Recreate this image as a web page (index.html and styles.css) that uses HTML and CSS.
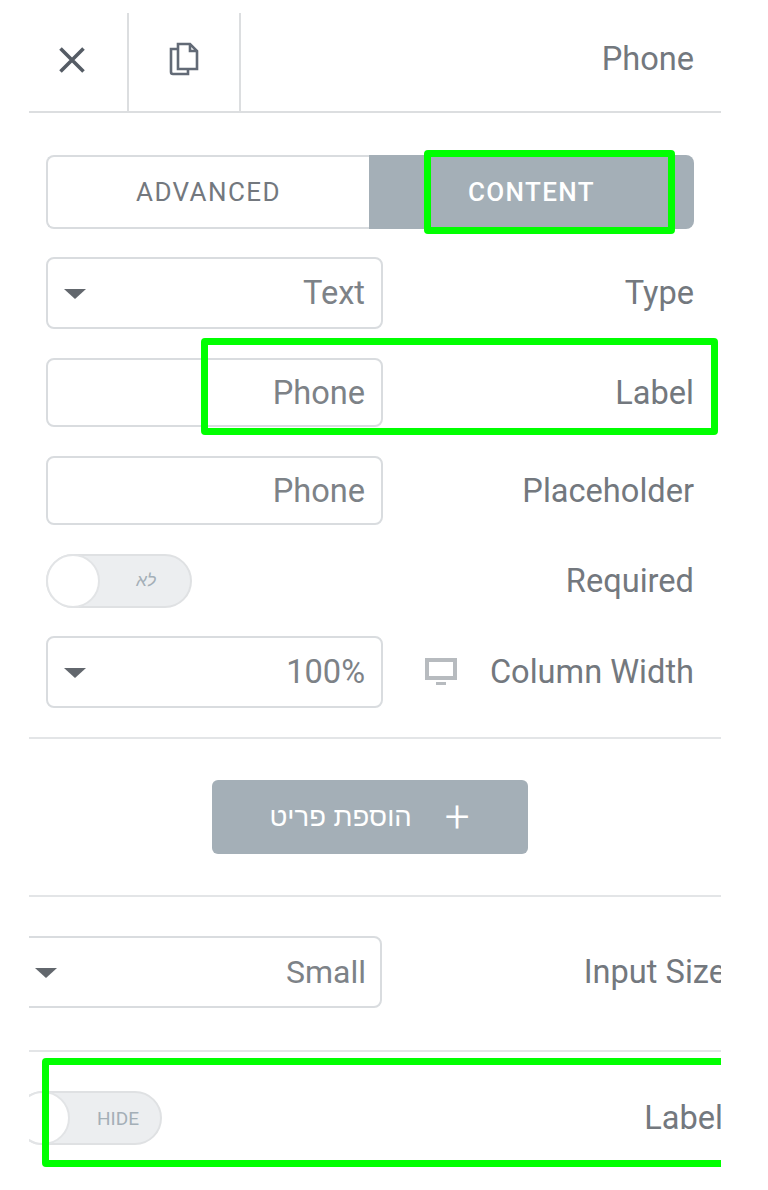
FILE: index.html
```html
<!DOCTYPE html>
<html lang="en">

<head>
    <meta charset="UTF-8" />
    <meta name="viewport" content="width=device-width, initial-scale=1" />
    <title>Phone field settings</title>
    <link rel="stylesheet" href="styles.css">
</head>

<body>
    <main class="panel">
        <header class="panel-head">
            <button class="head-btn close-btn" aria-label="Close">
                <svg width="28" height="28" viewBox="0 0 28 28"><path d="M2.5 2.5 25.5 25.5M25.5 2.5 2.5 25.5" fill="none" stroke="#555c65" stroke-width="3.6"/></svg>
            </button>
            <button class="head-btn copy-btn" aria-label="Duplicate">
                <svg width="30" height="34" viewBox="0 0 30 34" fill="none" stroke="#626a76" stroke-width="2.6">
                    <path d="M9 7H2V30a2 2 0 0 0 2 2H19V27"/>
                    <path d="M9 2H21L28 9V27H9Z"/>
                    <path d="M21 2V9H28"/>
                </svg>
            </button>
            <span class="head-title">Phone</span>
        </header>

        <section class="group group-fields">
            <div class="tabs">
                <div class="tab">ADVANCED</div>
                <div class="tab tab-active">CONTENT</div>
            </div>

            <div class="row">
                <div class="box box-select"><span class="caret"></span><span>Text</span></div>
                <label class="row-label">Type</label>
            </div>
            <div class="row">
                <div class="box box-input"><span>Phone</span></div>
                <label class="row-label">Label</label>
            </div>
            <div class="row">
                <div class="box box-input"><span>Phone</span></div>
                <label class="row-label">Placeholder</label>
            </div>
            <div class="row row-required">
                <div class="switch"><span class="knob"></span><span class="switch-text switch-he">לא</span></div>
                <label class="row-label">Required</label>
            </div>
            <div class="row">
                <div class="box box-select"><span class="caret"></span><span>100%</span></div>
                <div class="label-with-icon">
                    <svg class="monitor" width="32" height="28" viewBox="0 0 32 28">
                        <path d="M2 2H30V20H2Z" fill="#fff" stroke="#b7bbbf" stroke-width="4"/>
                        <path d="M11 25.5H21" stroke="#b7bbbf" stroke-width="3"/>
                    </svg>
                    <label class="row-label">Column Width</label>
                </div>
            </div>
        </section>

        <section class="group group-add">
            <button class="add-btn"><span class="add-plus">+</span><span dir="rtl">הוספת פריט</span></button>
        </section>

        <section class="group group-size">
            <div class="row row-clipped">
                <div class="box box-select box-wide"><span class="caret"></span><span>Small</span></div>
                <label class="row-label">Input Size</label>
            </div>
        </section>

        <section class="group group-last">
            <div class="row row-clipped row-toggle">
                <div class="switch switch-hide"><span class="knob"></span><span class="switch-text">HIDE</span></div>
                <label class="row-label">Label</label>
            </div>
        </section>

        <div class="mark mark-tab"></div>
        <div class="mark mark-label"></div>
        <div class="mark mark-toggle"></div>
    </main>
</body>

</html>
```
FILE: styles.css
```css
/* Reset */

* {
    margin: 0;
    padding: 0;
    box-sizing: border-box;
}

body {
    font-family: Roboto, 'Liberation Sans', sans-serif;
    background: #ffffff;
    color: #73787e;
}

button {
    font-family: inherit;
    background: none;
    border: none;
}

/* Panel */

.panel {
    position: relative;
    width: 692px;
    height: 1190px;
    margin-left: 29px;
    padding-top: 13px;
    overflow: hidden;
}

.panel-head {
    display: flex;
    align-items: stretch;
    height: 100px;
    border-bottom: 2px solid #dcdee0;
}

.head-btn {
    display: flex;
    align-items: center;
    justify-content: center;
    border-right: 2px solid #dcdee0;
}

.close-btn {
    width: 100px;
    padding: 0 13px 4px 0;
}

.copy-btn {
    width: 112px;
    padding: 0 0 6px 0;
}

.head-title {
    margin-left: auto;
    padding-right: 27px;
    font-size: 32.6px;
    line-height: 92px;
}

/* Groups */

.group {
    border-bottom: 2px solid #e3e5e7;
}

.group-fields {
    height: 626px;
    padding: 42px 27px 0 17px;
}

.group-add {
    display: flex;
    justify-content: center;
    height: 158px;
    padding: 41px 11px 0 0;
}

.group-size {
    height: 155px;
    padding-top: 39px;
}

.group-last {
    border-bottom: none;
    padding-top: 39px;
}

/* Tabs */

.tabs {
    display: flex;
    height: 74px;
    font-size: 26px;
    letter-spacing: 1.4px;
    margin-bottom: 28px;
}

.tab {
    display: flex;
    align-items: center;
    justify-content: center;
    flex: 0 0 323px;
    color: #73787e;
    border: 2px solid #d9dcdf;
    border-right: none;
    border-radius: 8px 0 0 8px;
}

.tab-active {
    flex: 1;
    background: #a4afb7;
    color: #ffffff;
    font-weight: 500;
    border: none;
    border-radius: 0 8px 8px 0;
}

/* Rows */

.row {
    display: flex;
    align-items: center;
    justify-content: space-between;
    margin-bottom: 29px;
}

.row-label {
    font-size: 32.6px;
}

.row-required {
    margin-bottom: 28px;
}

.row-clipped {
    margin-left: -17px;
    margin-right: -5px;
}

.row-toggle {
    margin-left: -13px;
    margin-right: -2px;
}

.label-with-icon {
    display: flex;
    align-items: center;
    gap: 33px;
}

/* Fields */

.box {
    display: flex;
    align-items: center;
    justify-content: flex-end;
    width: 337px;
    padding: 0 16px;
    border: 2px solid #d9dcdf;
    border-radius: 8px;
    font-size: 32.6px;
    color: #7d8287;
}

.box-select {
    justify-content: space-between;
    height: 72px;
}

.box-input {
    height: 69px;
}

.box-wide {
    width: 370px;
    padding: 0 14px 0 21px;
    font-size: 32px;
}

.caret {
    width: 0;
    height: 0;
    margin-top: 2px;
    border-left: 11px solid transparent;
    border-right: 11px solid transparent;
    border-top: 10px solid #62676d;
}

/* Switches */

.switch {
    position: relative;
    display: flex;
    align-items: center;
    justify-content: flex-end;
    width: 146px;
    height: 54px;
    padding-right: 34px;
    background: #eceef0;
    border: 2px solid #dfe1e3;
    border-radius: 27px;
}

.switch-hide {
    padding-right: 21px;
}

.knob {
    position: absolute;
    left: -2px;
    top: -2px;
    width: 54px;
    height: 54px;
    background: #ffffff;
    border: 2px solid #e2e4e6;
    border-radius: 50%;
}

.switch-text {
    font-size: 19px;
    color: #a4afb7;
}

.switch-he {
    font-family: 'Liberation Sans', sans-serif;
    font-size: 17px;
    font-style: italic;
}

/* Add button */

.add-btn {
    display: flex;
    align-items: center;
    gap: 33px;
    flex-direction: row-reverse;
    justify-content: center;
    width: 316px;
    height: 74px;
    background: #a4afb7;
    border-radius: 6px;
    color: #ffffff;
    font-family: 'Liberation Sans', sans-serif;
    font-size: 27.5px;
}

.add-plus {
    font-family: Roboto, sans-serif;
    font-size: 44px;
    font-weight: 300;
    line-height: 1;
}

/* Green highlight marks */

.mark {
    position: absolute;
    border: 7px solid #00ff00;
    border-radius: 4px;
}

.mark-tab {
    left: 395px;
    top: 150px;
    width: 251px;
    height: 84px;
}

.mark-label {
    left: 172px;
    top: 338px;
    width: 517px;
    height: 97px;
}

.mark-toggle {
    left: 13px;
    top: 1058px;
    width: 700px;
    height: 109px;
}
```
